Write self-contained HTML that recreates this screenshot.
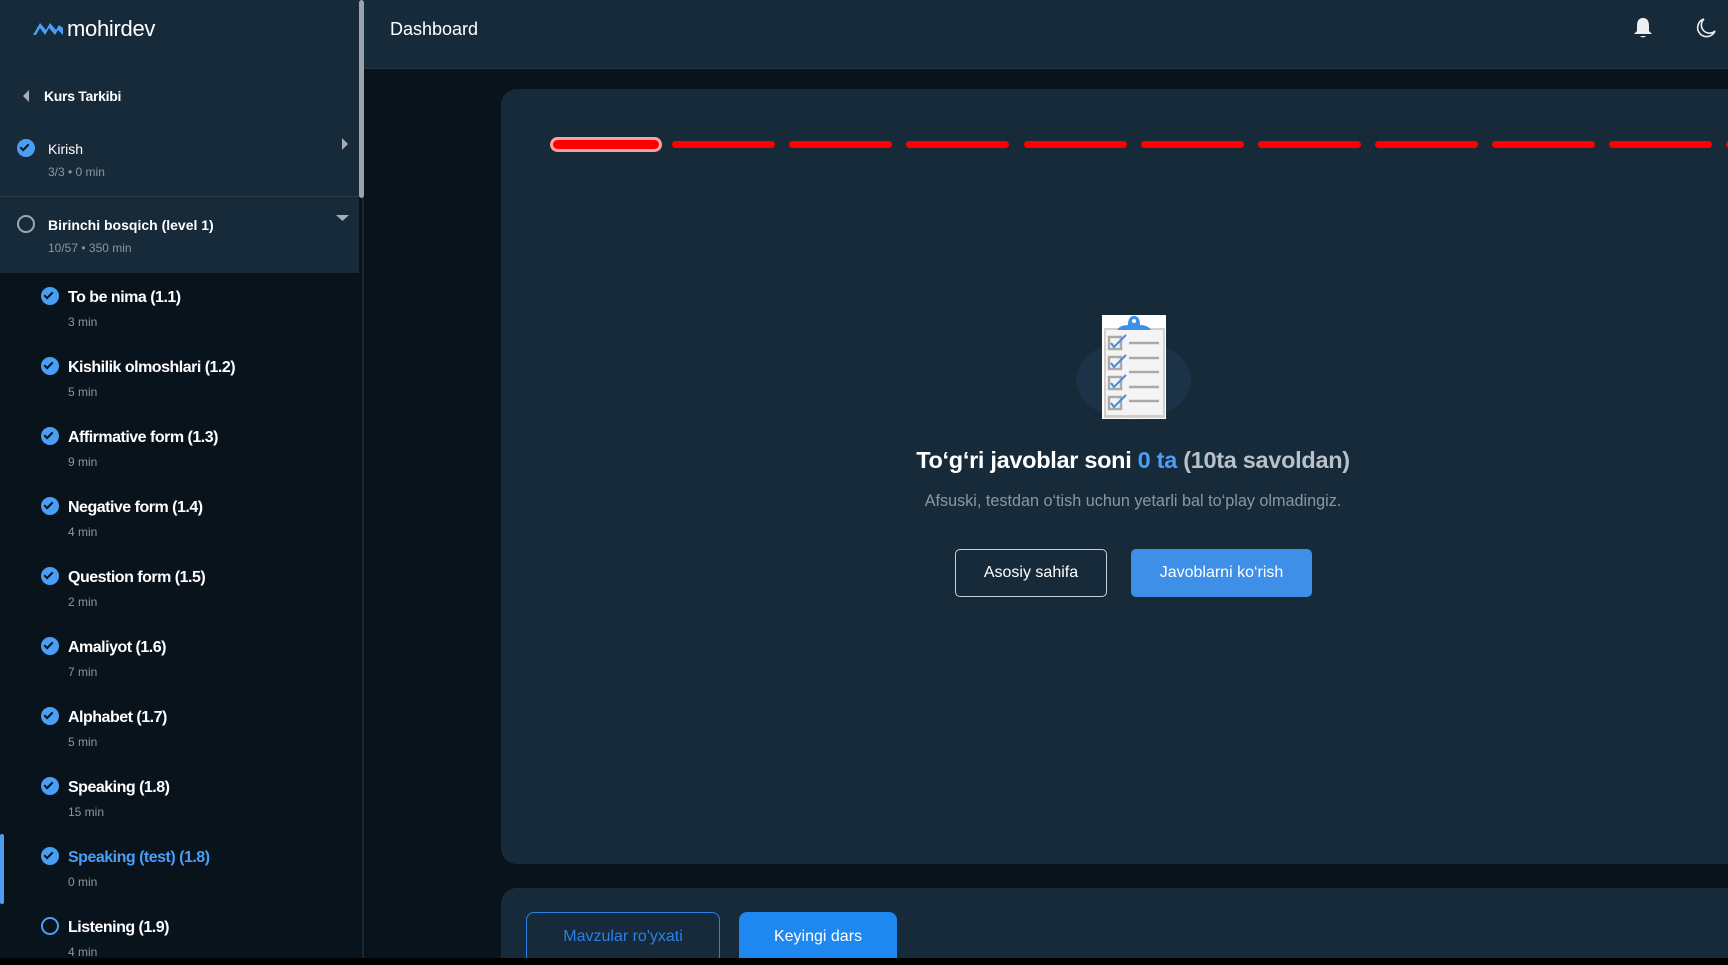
<!DOCTYPE html>
<html style="overflow:hidden"><head><meta charset="utf-8"><style>
*{box-sizing:border-box;margin:0;padding:0}
html,body{width:1728px;height:965px;overflow:hidden}
body{background:#09131c;font-family:"Liberation Sans",sans-serif;position:relative;color:#fff}
.abs{position:absolute}
#side{left:0;top:0;width:359px;height:958px;background:#09131c}
#sidetop{left:0;top:0;width:359px;height:273px;background:#172a3a}
.sep{left:0;top:196px;width:359px;height:1px;background:#2a3b4a}
.scroll{left:359px;top:0;width:5px;height:198px;background:#9aa1a8;border-radius:3px}
.sidebord{left:362px;top:198px;width:2px;height:760px;background:#1a2733}
#head{left:364px;top:0;width:1364px;height:69px;background:#172a3a;border-bottom:1px solid #22364a}
.t1{font-size:14px;font-weight:bold}
.t2{font-size:12px;color:#8a97a3}
.it{position:absolute;left:0;width:359px;height:70px}
.it .ic{position:absolute;left:41px;top:14px;width:18px;height:18px;border-radius:50%;background:#4a9ff5}
.it .ti{position:absolute;left:68px;top:16px;font-size:16px;font-weight:bold;letter-spacing:-0.5px}
.it .su{position:absolute;left:68px;top:42px;font-size:12px;color:#8a97a3}
.chk{position:absolute;left:5px;top:3px;width:5px;height:9px;border:solid #09131c;border-width:0 2px 2px 0;transform:rotate(45deg)}
.card{left:501px;top:89px;width:1240px;height:775px;background:#172a3a;border-radius:16px}
.card2{left:501px;top:888px;width:1240px;height:70px;background:#172a3a;border-radius:16px 16px 0 0}
.bar{top:141px;width:103px;height:7px;background:#f00;border-radius:4px}
.btn{display:flex;align-items:center;justify-content:center;font-size:16px;border-radius:5px}
</style></head><body>
<div class="abs" id="side"></div>
<div class="abs" id="sidetop"></div>
<div class="abs sep"></div>
<div class="abs sidebord"></div>
<div class="abs scroll"></div>
<svg class="abs" style="left:33px;top:21px" width="30" height="16" viewBox="0 0 30 16"><path d="M0 14 L7 2 L13 9 L17 2 L23 9 L26 4 L30 7 L30 14 L25 9 L22 14 L16 7 L12 14 L7 7 L3 14Z" fill="#4a9ff5"/></svg>
<div class="abs" style="left:67px;top:16px;font-size:22px;color:#fff;letter-spacing:-0.3px">mohirdev</div>
<svg class="abs" style="left:22px;top:90px" width="8" height="12"><path d="M7 0 L1 6 L7 12Z" fill="#aab"/></svg>
<div class="abs t1" style="left:44px;top:88px;font-size:14px;letter-spacing:-0.3px">Kurs Tarkibi</div>
<div class="abs" style="left:17px;top:139px;width:18px;height:18px;border-radius:50%;background:#4a9ff5"><div class="chk"></div></div>
<div class="abs t1" style="left:48px;top:141px;font-weight:normal;font-size:14px">Kirish</div>
<div class="abs t2" style="left:48px;top:165px">3/3 • 0 min</div>
<svg class="abs" style="left:341px;top:138px" width="8" height="12"><path d="M1 0 L7 6 L1 12Z" fill="#aab"/></svg>
<div class="abs" style="left:17px;top:215px;width:18px;height:18px;border-radius:50%;border:2px solid #9aa"></div>
<div class="abs t1" style="left:48px;top:217px;font-size:14px">Birinchi bosqich (level 1)</div>
<div class="abs t2" style="left:48px;top:241px">10/57 • 350 min</div>
<svg class="abs" style="left:336px;top:214px" width="13" height="8"><path d="M0 1 L13 1 L6.5 7Z" fill="#aab"/></svg>

<div class="it" style="top:273px"><div class="ic"><div class="chk"></div></div><div class="ti">To be nima (1.1)</div><div class="su">3 min</div></div>
<div class="it" style="top:343px"><div class="ic"><div class="chk"></div></div><div class="ti">Kishilik olmoshlari (1.2)</div><div class="su">5 min</div></div>
<div class="it" style="top:413px"><div class="ic"><div class="chk"></div></div><div class="ti">Affirmative form (1.3)</div><div class="su">9 min</div></div>
<div class="it" style="top:483px"><div class="ic"><div class="chk"></div></div><div class="ti">Negative form (1.4)</div><div class="su">4 min</div></div>
<div class="it" style="top:553px"><div class="ic"><div class="chk"></div></div><div class="ti">Question form (1.5)</div><div class="su">2 min</div></div>
<div class="it" style="top:623px"><div class="ic"><div class="chk"></div></div><div class="ti">Amaliyot (1.6)</div><div class="su">7 min</div></div>
<div class="it" style="top:693px"><div class="ic"><div class="chk"></div></div><div class="ti">Alphabet (1.7)</div><div class="su">5 min</div></div>
<div class="it" style="top:763px"><div class="ic"><div class="chk"></div></div><div class="ti">Speaking (1.8)</div><div class="su">15 min</div></div>
<div class="abs" style="left:0;top:834px;width:4px;height:70px;background:#4a9ff5;border-radius:2px"></div>
<div class="it" style="top:833px"><div class="ic"><div class="chk"></div></div><div class="ti" style="color:#4a9ff5">Speaking (test) (1.8)</div><div class="su">0 min</div></div>
<div class="it" style="top:903px"><div class="ic" style="background:none;border:2px solid #4a9ff5"></div><div class="ti">Listening (1.9)</div><div class="su">4 min</div></div>

<div class="abs" id="head"></div>
<div class="abs" style="left:390px;top:19px;font-size:18px">Dashboard</div>
<svg class="abs" style="left:1633px;top:17px" width="20" height="22" viewBox="0 0 20 22"><path d="M10 1 C5 1 4 5 4 9 L4 14 L1 17 L19 17 L16 14 L16 9 C16 5 15 1 10 1Z" fill="#eee"/><path d="M7 19 Q10 22 13 19Z" fill="#eee"/></svg>
<svg class="abs" style="left:1695px;top:17px" width="22" height="22" viewBox="0 0 22 22"><path d="M9 2 A9 9 0 1 0 20 14 A7 7 0 0 1 9 2Z" fill="none" stroke="#eee" stroke-width="1.6"/></svg>

<div class="abs card"></div>
<div class="abs" style="left:550px;top:137px;width:112px;height:15px;border-radius:8px;background:#ffa0a0"></div>
<div class="abs" style="left:553px;top:140px;width:106px;height:9px;border-radius:5px;background:#f00"></div>
<div class="abs bar" style="left:672px"></div>
<div class="abs bar" style="left:789px"></div>
<div class="abs bar" style="left:906px"></div>
<div class="abs bar" style="left:1024px"></div>
<div class="abs bar" style="left:1141px"></div>
<div class="abs bar" style="left:1258px"></div>
<div class="abs bar" style="left:1375px"></div>
<div class="abs bar" style="left:1492px"></div>
<div class="abs bar" style="left:1609px"></div>
<div class="abs bar" style="left:1726px"></div>

<div class="abs" style="left:1076px;top:340px;width:115px;height:80px;border-radius:50%;background:#1b3247"></div>
<svg class="abs" style="left:1102px;top:315px" width="64" height="104" viewBox="0 0 64 104">
<rect x="0" y="0" width="64" height="104" fill="#fff"/>
<rect x="2" y="13" width="61" height="90" fill="#d0d0d0"/>
<rect x="4" y="15" width="57" height="85" fill="#f4f4f4"/>
<path d="M15 15 Q18 10 26 10 Q26 1 32 1 Q38 1 38 10 Q46 10 49 15Z" fill="#3d8fe8"/>
<circle cx="32" cy="6" r="2" fill="#fff"/>
<g fill="none" stroke="#aaa" stroke-width="2.5">
<rect x="7" y="22" width="12" height="12"/><rect x="7" y="42" width="12" height="12"/><rect x="7" y="62" width="12" height="12"/><rect x="7" y="82" width="12" height="12"/>
<path d="M27 28 H57 M27 43 H57 M27 57 H57 M27 72 H57 M27 86 H57"/></g>
<g fill="none" stroke="#3d8fe8" stroke-width="2">
<path d="M9 28 L12 32 L24 20"/><path d="M9 48 L12 52 L24 40"/><path d="M9 68 L12 72 L24 60"/><path d="M9 88 L12 92 L24 80"/></g>
</svg>
<div class="abs" style="left:801px;top:447px;width:664px;text-align:center;font-size:23.5px;font-weight:bold;letter-spacing:-0.3px">To‘g‘ri javoblar soni <span style="color:#4a9ff5">0 ta</span> <span style="color:#b8c0c8">(10ta savoldan)</span></div>
<div class="abs" style="left:801px;top:492px;width:664px;text-align:center;font-size:16.2px;color:#8a97a3">Afsuski, testdan o‘tish uchun yetarli bal to‘play olmadingiz.</div>
<div class="abs btn" style="left:955px;top:549px;width:152px;height:48px;border:1px solid #c8d0d8">Asosiy sahifa</div>
<div class="abs btn" style="left:1131px;top:549px;width:181px;height:48px;background:#3d8fe8">Javoblarni ko‘rish</div>

<div class="abs card2"></div>
<div class="abs btn" style="left:526px;top:912px;width:194px;height:56px;border:1px solid #2b80e8;color:#2b80e8;border-radius:8px;padding-bottom:6px">Mavzular ro'yxati</div>
<div class="abs btn" style="left:739px;top:912px;width:158px;height:56px;background:#1e88f0;border-radius:8px;padding-bottom:6px">Keyingi dars</div>
<div class="abs" style="left:0;top:958px;width:1728px;height:7px;background:#000"></div>
</body></html>
